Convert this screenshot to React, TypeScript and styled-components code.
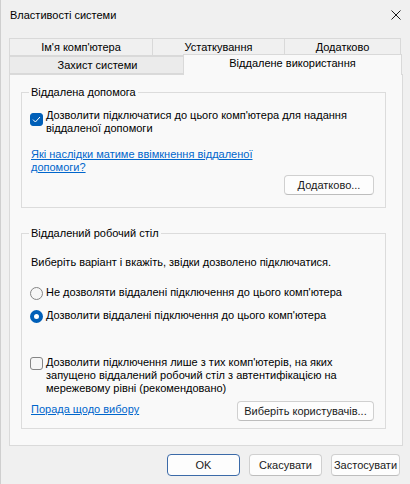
import React from "react";
import styled, { createGlobalStyle } from "styled-components";

const Global = createGlobalStyle`
  html, body { margin: 0; padding: 0; }
  body {
    background: #f0f0f0;
    font-family: "Liberation Sans", Arial, sans-serif;
    font-size: 11px;
    color: #000;
  }
  * { box-sizing: border-box; }
`;

const Window = styled.div`
  width: 410px;
  height: 484px;
  background: #f0f0f0;
  border-left: 1px solid #cfcfcf;
  display: flex;
  flex-direction: column;
  line-height: 13px;
`;

const TitleBar = styled.div`
  height: 30px;
  display: flex;
  align-items: center;
  justify-content: space-between;
  padding: 0 9px 0 9px;
  flex-shrink: 0;
`;

const Title = styled.span`
  font-size: 11px;
  color: #000;
`;

const CloseIcon = () => (
  <svg width="10" height="10" viewBox="0 0 10 10">
    <path d="M0.5 0.5 L9.5 9.5 M9.5 0.5 L0.5 9.5" stroke="#1a1a1a" strokeWidth="1" fill="none" />
  </svg>
);

const Tabs = styled.div`
  margin-top: 8px;
  padding-left: 8px;
  display: flex;
  flex-direction: column;
`;

const TabRow = styled.div`
  display: flex;
  height: 18px;
  align-items: flex-end;
`;

const Tab = styled.div<{ $w: number; $active?: boolean; $dim?: boolean }>`
  width: ${(p) => p.$w}px;
  height: ${(p) => (p.$active ? 21 : 18)}px;
  margin-left: ${(p) => (p.$active ? -2 : 0)}px;
  margin-right: ${(p) => (p.$active ? -2 : -1)}px;
  margin-bottom: ${(p) => (p.$active ? -1 : 0)}px;
  position: relative;
  z-index: ${(p) => (p.$active ? 2 : 1)};
  border: 1px solid #d9d9d9;
  border-bottom: ${(p) => (p.$active ? "none" : "1px solid #d9d9d9")};
  background: ${(p) => (p.$active ? "#f9f9f9" : p.$dim ? "#ebebeb" : "#f0f0f0")};
  text-align: center;
  line-height: 17px;
  white-space: nowrap;
  color: #000;
`;

const Panel = styled.div`
  margin: 0 7px 0 8px;
  height: 372px;
  border: 1px solid #dadada;
  background: #f9f9f9;
  padding: 11px 16px 0 11px;
  display: flex;
  flex-direction: column;
`;

const Group = styled.fieldset<{ $gap?: number }>`
  margin: ${(p) => p.$gap ?? 0}px 0 0 0;
  padding: 0;
  border: 1px solid #dcdcdc;
  min-width: 0;
`;

const Legend = styled.legend`
  margin-left: 7px;
  padding: 0 2px;
  line-height: 13px;
  color: #000;
`;

const GroupBody = styled.div<{ $pt: number; $pb: number }>`
  padding: ${(p) => p.$pt}px 11px ${(p) => p.$pb}px 9px;
  display: flex;
  flex-direction: column;
`;

const CheckRow = styled.label<{ $mt?: number }>`
  display: flex;
  align-items: flex-start;
  gap: 3px;
  margin-top: ${(p) => p.$mt ?? 0}px;
  margin-left: -1px;
`;

const Box = styled.span<{ $checked?: boolean; $mt: number }>`
  flex-shrink: 0;
  width: 13px;
  height: 13px;
  margin-top: ${(p) => p.$mt}px;
  border-radius: 3px;
  border: 1px solid ${(p) => (p.$checked ? "#005fb8" : "#858585")};
  background: ${(p) => (p.$checked ? "#005fb8" : "#f6f6f6")};
  display: flex;
  align-items: center;
  justify-content: center;
`;

const RadioCircle = styled.span<{ $checked?: boolean }>`
  flex-shrink: 0;
  width: 13px;
  height: 13px;
  margin-top: 1px;
  border-radius: 50%;
  border: ${(p) => (p.$checked ? "4px solid #005fb8" : "1px solid #858585")};
  background: ${(p) => (p.$checked ? "#ffffff" : "#f6f6f6")};
`;

const Text = styled.span<{ $mt?: number }>`
  display: block;
  margin-top: ${(p) => p.$mt ?? 0}px;
  color: #000;
`;

const Link = styled.a<{ $mt?: number }>`
  display: block;
  margin-top: ${(p) => p.$mt ?? 0}px;
  color: #0066cc;
  text-decoration: underline;
  cursor: pointer;
`;

const Button = styled.button<{ $w: number; $h?: number; $default?: boolean }>`
  width: ${(p) => p.$w}px;
  height: ${(p) => p.$h ?? 20}px;
  padding: 0;
  font-family: "Liberation Sans", Arial, sans-serif;
  font-size: 11px;
  color: #1a1a1a;
  background: #fdfdfd;
  border: 1px solid ${(p) => (p.$default ? "#3b6aa8" : "#d0d0d0")};
  border-bottom-color: ${(p) => (p.$default ? "#3b6aa8" : "#bdbdbd")};
  border-radius: 4px;
  white-space: nowrap;
  overflow: hidden;
  flex-shrink: 0;
`;

const RightButton = styled(Button)`
  align-self: flex-end;
  margin-top: 1px;
`;

const SplitRow = styled.div`
  display: flex;
  justify-content: space-between;
  align-items: flex-start;
  margin-top: 6px;
`;

const Footer = styled.div`
  display: flex;
  justify-content: flex-end;
  gap: 9px;
  margin-top: 8px;
  padding-right: 10px;
`;

const Check = () => (
  <svg width="9" height="7" viewBox="0 0 9 7">
    <path d="M1 3.6 L3.4 6 L8 1" stroke="#ffffff" strokeWidth="1" fill="none" />
  </svg>
);

export default function App() {
  return (
    <>
      <Global />
      <Window>
        <TitleBar>
          <Title>Властивості системи</Title>
          <CloseIcon />
        </TitleBar>
        <Tabs>
          <TabRow>
            <Tab $w={144}>Ім'я комп'ютера</Tab>
            <Tab $w={133}>Устаткування</Tab>
            <Tab $w={117}>Додатково</Tab>
          </TabRow>
          <TabRow>
            <Tab $w={177} $dim>Захист системи</Tab>
            <Tab $w={219} $active>Віддалене використання</Tab>
          </TabRow>
        </Tabs>
        <Panel>
          <Group>
            <Legend>Віддалена допомога</Legend>
            <GroupBody $pt={10} $pb={12}>
              <CheckRow>
                <Box $checked $mt={4}>
                  <Check />
                </Box>
                <Text>
                  Дозволити підключатися до цього комп'ютера для надання
                  <br />
                  віддаленої допомоги
                </Text>
              </CheckRow>
              <Link $mt={13}>
                Які наслідки матиме ввімкнення віддаленої
                <br />
                допомоги?
              </Link>
              <RightButton $w={90}>Додатково...</RightButton>
            </GroupBody>
          </Group>
          <Group $gap={19}>
            <Legend>Віддалений робочий стіл</Legend>
            <GroupBody $pt={16} $pb={7}>
              <Text>Виберіть варіант і вкажіть, звідки дозволено підключатися.</Text>
              <CheckRow $mt={17}>
                <RadioCircle />
                <Text>Не дозволяти віддалені підключення до цього комп'ютера</Text>
              </CheckRow>
              <CheckRow $mt={9}>
                <RadioCircle $checked />
                <Text>Дозволити віддалені підключення до цього комп'ютера</Text>
              </CheckRow>
              <CheckRow $mt={33}>
                <Box $mt={1} />
                <Text>
                  Дозволити підключення лише з тих комп'ютерів, на яких
                  <br />
                  запущено віддалений робочий стіл з автентифікацією на
                  <br />
                  мережевому рівні (рекомендовано)
                </Text>
              </CheckRow>
              <SplitRow>
                <Link $mt={2}>Порада щодо вибору</Link>
                <Button $w={137}>Виберіть користувачів...</Button>
              </SplitRow>
            </GroupBody>
          </Group>
        </Panel>
        <Footer>
          <Button $w={73} $h={22} $default>OK</Button>
          <Button $w={73} $h={22}>Скасувати</Button>
          <Button $w={69} $h={22}>Застосувати</Button>
        </Footer>
      </Window>
    </>
  );
}
